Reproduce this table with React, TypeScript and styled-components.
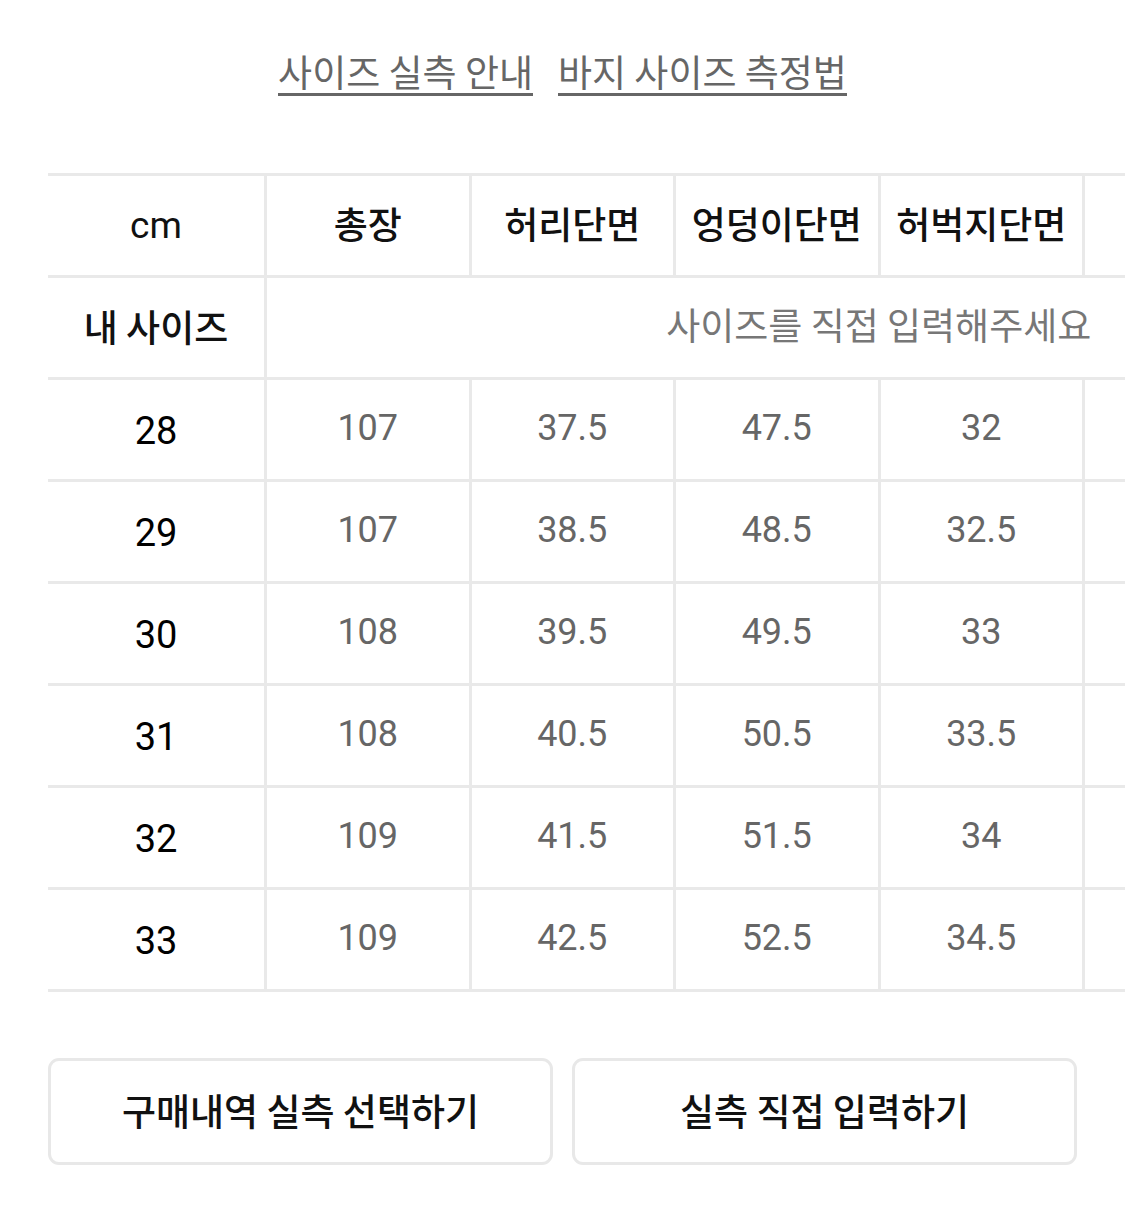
import React from "react";
import styled, { createGlobalStyle } from "styled-components";

const GlobalStyle = createGlobalStyle`
  html, body { margin: 0; padding: 0; background: #fff; }
  body {
    font-family: Roboto, "Noto Sans CJK KR", sans-serif;
    -webkit-font-smoothing: antialiased;
  }
`;

const Page = styled.div`
  padding: 40px 48px 60px;
  overflow: hidden;
`;

const LinkRow = styled.div`
  height: 66px;
  display: flex;
  justify-content: center;
  align-items: center;
  gap: 25px;
`;

const GuideLink = styled.a`
  display: inline-block;
  font-family: "Noto Sans CJK KR", sans-serif;
  font-size: 37px;
  line-height: 40px;
  color: #666;
  text-decoration: none;
  border-bottom: 3px solid #666;
  padding-bottom: 2px;
  cursor: pointer;
`;

const TableScroller = styled.div`
  margin-top: 67px;
  margin-right: -48px;
  overflow: hidden;
`;

const Table = styled.div`
  display: grid;
  width: max-content;
  grid-template-columns: 216px repeat(5, 201.5px);
  grid-auto-rows: 99px;
  gap: 3px;
  padding: 3px 0;
  background: #e9e9e9;
`;

const Cell = styled.div<{ $span?: number }>`
  background: #fff;
  display: flex;
  align-items: center;
  justify-content: center;
  grid-column: ${(p) => (p.$span ? `span ${p.$span}` : "auto")};
  white-space: nowrap;
`;

const HeadCell = styled(Cell)`
  font-family: "Noto Sans CJK KR", sans-serif;
  font-size: 37px;
  font-weight: 500;
  color: #111;
  padding-bottom: 6px;
`;

const UnitCell = styled(Cell)`
  font-family: Roboto, sans-serif;
  font-size: 37px;
  color: #111;
`;

const LabelCell = styled(Cell)`
  font-family: Roboto, sans-serif;
  font-size: 38px;
  color: #000;
  padding-top: 3px;
`;

const MyLabelCell = styled(Cell)`
  font-family: "Noto Sans CJK KR", sans-serif;
  font-size: 37px;
  font-weight: 500;
  color: #111;
  padding-bottom: 4px;
`;

const PlaceholderCell = styled(Cell)`
  font-family: "Noto Sans CJK KR", sans-serif;
  font-size: 37px;
  color: #777;
  padding: 0 0 8px 204px;
`;

const DataCell = styled(Cell)`
  font-family: Roboto, sans-serif;
  font-size: 36px;
  color: #666;
  padding-bottom: 4px;
`;

const ButtonRow = styled.div`
  margin-top: 66px;
  display: grid;
  grid-template-columns: 1fr 1fr;
  gap: 19px;
`;

const ActionButton = styled.button`
  height: 107px;
  border: 3px solid #e8e8e8;
  border-radius: 11px;
  background: #fff;
  font-family: "Noto Sans CJK KR", sans-serif;
  font-size: 37px;
  font-weight: 500;
  color: #111;
  padding: 0 0 4px;
  cursor: pointer;
`;

const headers = ["총장", "허리단면", "엉덩이단면", "허벅지단면", ""];

const rows: { size: string; values: string[] }[] = [
  { size: "28", values: ["107", "37.5", "47.5", "32", ""] },
  { size: "29", values: ["107", "38.5", "48.5", "32.5", ""] },
  { size: "30", values: ["108", "39.5", "49.5", "33", ""] },
  { size: "31", values: ["108", "40.5", "50.5", "33.5", ""] },
  { size: "32", values: ["109", "41.5", "51.5", "34", ""] },
  { size: "33", values: ["109", "42.5", "52.5", "34.5", ""] },
];

export default function App() {
  return (
    <>
      <GlobalStyle />
      <Page>
        <LinkRow>
          <GuideLink>사이즈 실측 안내</GuideLink>
          <GuideLink>바지 사이즈 측정법</GuideLink>
        </LinkRow>

        <TableScroller>
          <Table>
            <UnitCell>cm</UnitCell>
            {headers.map((h, i) => (
              <HeadCell key={i}>{h}</HeadCell>
            ))}

            <MyLabelCell>내 사이즈</MyLabelCell>
            <PlaceholderCell $span={5}>사이즈를 직접 입력해주세요</PlaceholderCell>

            {rows.map((r) => (
              <React.Fragment key={r.size}>
                <LabelCell>{r.size}</LabelCell>
                {r.values.map((v, i) => (
                  <DataCell key={i}>{v}</DataCell>
                ))}
              </React.Fragment>
            ))}
          </Table>
        </TableScroller>

        <ButtonRow>
          <ActionButton>구매내역 실측 선택하기</ActionButton>
          <ActionButton>실측 직접 입력하기</ActionButton>
        </ButtonRow>
      </Page>
    </>
  );
}
